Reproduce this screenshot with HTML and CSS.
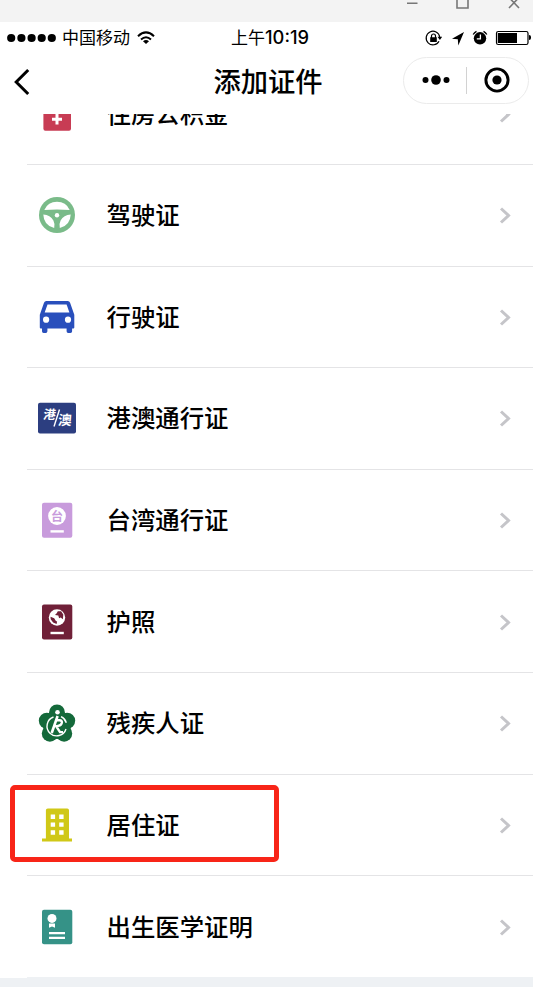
FILE: index.html
```html
<!DOCTYPE html>
<html lang="zh-CN">
	<head>
		<meta charset="UTF-8">
		<meta name="viewport" content="width=device-width,initial-scale=1">
		<title>添加证件</title>
		<link rel="stylesheet" href="styles.css">
	</head>
	<body>
		<div id="wrap">
			<div class="window-bar">
				<svg width="121" height="22" viewBox="0 0 121 22" fill="none" stroke="#777" stroke-width="1.6">
					<path d="M0 3.3h10.5M50 -3v11h11v-11M102 -2.500l10 10.500M112 -2.500l-10 10.500"/>
				</svg>
			</div>
			<div class="status">
				<div class="carrier">
					<svg class="signal" width="50" height="10" viewBox="0 0 50 10">
						<circle cx="4.2" cy="5" r="4.1"/><circle cx="14.4" cy="5" r="4.1"/><circle cx="24.6" cy="5" r="4.1"/><circle cx="34.7" cy="5" r="4.1"/><circle cx="44.8" cy="5" r="4.1"/>
					</svg>
					<span>中国移动</span>
					<svg class="wifi" width="18" height="14" viewBox="0 0 18 14" fill="none" stroke="#000" stroke-width="2">
						<path d="M1 5.2Q9 -2.4 17 5.2M4 8.5Q9 4 14 8.5"/>
						<path d="M9 13L6 10.2Q9 8 12 10.2z" fill="#000" stroke="none"/>
					</svg>
				</div>
				<div class="time">上午<b>10:19</b></div>
				<svg class="state" width="107" height="18" viewBox="0 0 107 18">
					<g fill="none" stroke="#000" stroke-width="1.2">
						<path d="M17 12.200A6.800 6.800 0 1 1 17.700 8"/>
						<path d="M9.500 9V7a2 2 0 0 1 4 0V9"/>
						<rect x="74.500" y="2.500" width="31.500" height="13" rx="1.800"/>
					</g>
					<path d="M8.200 8.300h6.600v4.800H8.200zM15.500 7.800h4.700L17.900 11zM42 3L30 9.800l5.800.4.500 6.300z"/>
					<circle cx="58" cy="9.300" r="6.200"/>
					<path d="M51.200 5.500a8 8 0 0 1 3.300-3.200M61.500 2.300a8 8 0 0 1 3.300 3.200" fill="none" stroke="#000" stroke-width="1.400"/>
					<path d="M58.400 5.600v4.300h-3.600" fill="none" stroke="#fff" stroke-width="1.300"/>
					<path d="M75.800 4h19.200v10H75.800z"/>
				</svg>
				<i class="battery-cap"></i>
			</div>
			<div class="nav">
				<svg class="back" width="18" height="28" viewBox="0 0 18 28" fill="none" stroke="#000" stroke-width="3">
					<path d="M15.200 2L3.200 14l12 12"/>
				</svg>
				<h1>添加证件</h1>
				<div class="capsule">
					<svg width="28" height="12" viewBox="0 0 28 12">
						<circle cx="3.500" cy="6" r="3"/><circle cx="14" cy="6" r="4.800"/><circle cx="24.500" cy="6" r="3"/>
					</svg>
					<i></i>
					<svg width="26" height="26" viewBox="0 0 26 26">
						<circle cx="13" cy="13" r="11.100" fill="none" stroke="#000" stroke-width="2.900"/>
						<circle cx="13" cy="13" r="4.600"/>
					</svg>
				</div>
			</div>
			<div class="list">
				<ul>
					<li>
						<svg class="icon" viewBox="0 0 40 40">
							<rect x="6.400" y="2.500" width="27.600" height="34.300" rx="2" fill="#c83c54"/>
							<path d="M15 25.300h10M20 18v12.500" stroke="#fff" stroke-width="3"/>
						</svg>
						<span>住房公积金</span>
					</li>
					<li>
						<svg class="icon" viewBox="0 0 40 40">
							<circle cx="20" cy="20" r="18" fill="#7abb89"/>
							<path d="M7.300 14.900Q11 6.800 20 6.800t12.700 8.100Q20 14 7.300 14.900zM6.300 19.500q7 .6 10.100 6 1.800 3.500.8 7.500Q6.700 30.500 6.300 19.500zM33.700 19.500q-7 .6-10.100 6-1.800 3.500-.8 7.500Q33.300 30.500 33.700 19.500z" fill="#fff"/>
							<circle cx="20" cy="20.300" r="2.200" fill="#fff"/>
						</svg>
						<span>驾驶证</span>
					</li>
					<li>
						<svg class="icon" viewBox="0 0 40 40">
							<path d="M9.400 4h21.300q1.800 0 2.400 1.800l4.200 12v12.700q0 1-1 1h-1.200v2.800q0 1.600-1.600 1.600h-2.300q-1.600 0-1.600-1.600v-2.800H10.400v2.800q0 1.600-1.600 1.600H6.600Q5 35.900 5 34.300v-2.800H3.800q-1 0-1-1V17.800L7 5.800Q7.600 4 9.400 4z" fill="#294fbc"/>
							<path d="M10.500 7.500h19.100l2.800 7.900H7.700z" fill="#fff"/>
							<circle cx="9.100" cy="22.700" r="3.100" fill="#fff"/><circle cx="31" cy="22.700" r="3.100" fill="#fff"/>
						</svg>
						<span>行驶证</span>
					</li>
					<li>
						<svg class="icon" viewBox="0 0 40 40">
							<rect x="1" y="4.800" width="38" height="30.600" rx="2" fill="#2c3e80"/>
							<g class="mark">
								<text x="0" y="0" font-size="12.500" transform="translate(5.800 20.800) skewX(-8)">港</text>
								<text x="0" y="0" font-size="13.500" transform="translate(20.800 26.800) skewX(-5)">澳</text>
							</g>
							<path d="M22.500 11.500l-5.500 17" stroke="#fff" stroke-width="1.400"/>
						</svg>
						<span>港澳通行证</span>
					</li>
					<li>
						<svg class="icon" viewBox="0 0 40 40">
							<rect x="5" y="2.800" width="30.300" height="35" rx="2" fill="#c89bdc"/>
							<circle cx="20" cy="16" r="8.900" fill="#fff"/>
							<text class="seal" x="14" y="20.500" font-size="12">台</text>
							<path d="M13.500 31.400h13.300" stroke="#fff" stroke-width="2.400"/>
						</svg>
						<span>台湾通行证</span>
					</li>
					<li>
						<svg class="icon" viewBox="0 0 40 40">
							<rect x="5" y="2.500" width="30.300" height="35" rx="2" fill="#702038"/>
							<circle cx="20" cy="15.500" r="8.200" fill="#fff"/>
							<path d="M13.500 14.800l3.700 1.500 1.700 2.700 1.200.6-.5 2.500-3.500-1.600-2.400-3.200zM20.800 9.300l3.300 0 2.200 3.300-.4 4.700-2.200-1.900-1.600.8-.8-2.700-3.300-.6 1.700-1.700z" fill="#702038"/>
							<path d="M13.500 31h13.300" stroke="#fff" stroke-width="2.400"/>
						</svg>
						<span>护照</span>
					</li>
					<li>
						<svg class="icon" viewBox="0 0 40 40">
							<g fill="#14693a">
								<circle cx="20" cy="9.300" r="7.900"/><circle cx="9.900" cy="17.800" r="8.100"/><circle cx="30.100" cy="17.800" r="8.100"/><circle cx="12.900" cy="30.600" r="8.100"/><circle cx="27.100" cy="30.600" r="8.100"/><circle cx="20" cy="22" r="14"/>
							</g>
							<circle cx="20.500" cy="9.300" r="2.300" fill="#fff"/>
							<g fill="none" stroke="#fff">
								<path d="M16.500 14A9.700 9.700 0 1 0 29 26M24 13.700a9.500 9.500 0 0 1 5.300 6" stroke-width="1.400"/>
								<path d="M20.600 13L14.700 30" stroke-width="2.600"/>
								<path d="M19.500 17.300h3.300q3 .4 1.800 3.200-1 2.500-5.500 2.600l3.900 6h3" stroke-width="2.400"/>
							</g>
						</svg>
						<span>残疾人证</span>
					</li>
					<li class="marked">
						<svg class="icon" viewBox="0 0 40 40">
							<path d="M10.800 3.500h19.400q1.800 0 1.800 1.800v28.100h3v3H5v-3h3.900V5.300q0-1.800 1.900-1.800z" fill="#d0c817"/>
							<path d="M13.700 9.600h4.400v4.400h-4.400zM22.200 9.600h4.400v4.400h-4.400zM13.700 17.400h4.400v4.400h-4.400zM22.200 17.400h4.400v4.400h-4.400zM13.700 25.300h4.400v4.400h-4.400zM22.200 25.300h4.400v4.400h-4.400z" fill="#fff"/>
						</svg>
						<span>居住证</span>
					</li>
					<li>
						<svg class="icon" viewBox="0 0 40 40">
							<rect x="5" y="2.800" width="30.300" height="34.400" rx="2" fill="#359287"/>
							<circle cx="15" cy="11.400" r="4.500" fill="#fff"/>
							<path d="M12 16.500h6v4.300l-3-1.400-3 1.400z" fill="#fff"/>
							<path d="M12 26.200h16M12 30.900h16" stroke="#fff" stroke-width="2.200"/>
						</svg>
						<span>出生医学证明</span>
					</li>
				</ul>
			</div>
		</div>
		<script>
			//每一行右侧的箭头
			document.querySelectorAll('.list li').forEach(li=>{
				li.insertAdjacentHTML('beforeend','<svg class="arrow" viewBox="0 0 12 18"><path d="M2 2.500l7.500 7L2 16.500"/></svg>');
			});
		</script>
	</body>
</html>
```
FILE: styles.css
```css
body {
	margin: 0;
	font-family: "Noto Sans CJK SC", sans-serif;
	color: #000;
}
svg{
	display: block;
	flex: none;
}
#wrap{
	height: 100vh;
	display: flex;
	flex-direction: column;
	overflow: hidden;
	background: #fff;
}

.window-bar{
	height: 22px;
	flex: none;
	padding-right: 5px;
	display: flex;
	justify-content: flex-end;
	background: #f3f3f3;
}

.status{
	height: 30px;
	flex: none;
	display: grid;
	grid-template-columns: 231px 1fr 107px 2px;
	align-items: center;
	padding-right: 2px;
	font-size: 17px;
	line-height: 30px;
}
.carrier{
	display: flex;
	align-items: center;
	padding-left: 7px;
}
.carrier span{
	margin: 0 7px 0 5px;
	padding-bottom: 1px;
}
.time{
	white-space: nowrap;
	padding-bottom: 1px;
}
.time b{
	font-family: Inter, sans-serif;
	font-size: 18.3px;
	font-weight: 500;
}
.battery-cap{
	width: 2px;
	height: 5px;
	border-radius: 0 2px 2px 0;
	background: #000;
}

.nav{
	height: 62px;
	flex: none;
	display: grid;
	grid-template-columns: 133px 1fr 130px;
	align-items: center;
}
.back{
	margin: 0 0 2px 13px;
}
.nav h1{
	margin: 0;
	padding-bottom: 6px;
	text-align: center;
	font-size: 27.3px;
	line-height: 40px;
	font-weight: 500;
}
.capsule{
	width: 126px;
	height: 47px;
	margin-bottom: 6px;
	box-sizing: border-box;
	border: 1px solid #ebebeb;
	border-radius: 24px;
	display: flex;
	align-items: center;
	padding-left: 18px;
}
.capsule i{
	width: 1px;
	height: 27px;
	margin: 0 17px 0 16px;
	background: #d2d2d2;
}

/* 列表滚动到底部，第一行被导航栏遮住一部分 */
.list{
	flex: 1;
	min-height: 0;
	display: flex;
	flex-direction: column;
	justify-content: flex-end;
	overflow: hidden;
	border-bottom: 9px solid #eef1f4;
}
.list ul{
	margin: 0;
	padding: 0;
	list-style: none;
}
.list li{
	height: 101.65px;
	margin-left: 27px;
	padding: 0 22px 0 10px;
	box-sizing: border-box;
	border-bottom: 1px solid #e4e4e6;
	display: flex;
	align-items: center;
	position: relative;
}
.list li:last-child{
	border-bottom-color: #eef1f4;
}
.list span{
	flex: 1;
	margin-left: 29.5px;
	padding-bottom: 2px;
	font-size: 24.4px;
	line-height: 36px;
	font-weight: 500;
}
.icon{
	width: 40px;
	height: 40px;
}
.mark{
	fill: #fff;
	font-weight: 700;
}
.seal{
	fill: #c89bdc;
	font-weight: 700;
}
.arrow{
	width: 12px;
	height: 18px;
	fill: none;
	stroke: #c5c5c9;
	stroke-width: 3;
}
.marked::after{
	content: "";
	position: absolute;
	left: -17px;
	top: 10px;
	width: 269px;
	height: 77px;
	box-sizing: border-box;
	border: 5px solid #f82518;
	border-radius: 5px;
}
```
